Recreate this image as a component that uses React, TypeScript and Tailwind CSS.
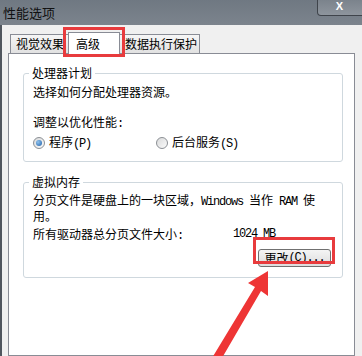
import React from "react";

// latin glyphs in the old SimSun dialog are half-width, so squeeze the mono a bit
const L = ({ children }: { children: React.ReactNode }) => (
  <span className="font-['Liberation_Mono',monospace] text-[12px] tracking-[-1.2px]">{children}</span>
);

const Radio = ({ checked }: { checked?: boolean }) => (
  <span className="w-[12px] h-[12px] rounded-full border border-[#8b8f94] bg-gradient-to-br from-[#d9dadb] to-[#fbfbfb] flex items-center justify-center shrink-0">
    {checked && <span className="w-[6px] h-[6px] rounded-full bg-[radial-gradient(circle_at_35%_35%,#8fc3ee,#1f5fa8)]"></span>}
  </span>
);

const Tab = ({ label, width, active }: { label: string; width: string; active?: boolean }) => (
  <div
    className={
      active
        ? `relative z-10 h-[22px] -mb-px -ml-px bg-white border border-b-0 border-[#898c95] pl-[7px] flex items-center ${width}`
        : `h-[19px] -ml-px first:ml-0 bg-gradient-to-b from-[#f6f6f6] to-[#e1e1e1] border border-b-0 border-[#898c95] pl-[5px] flex items-center ${width}`
    }
  >
    {label}
  </div>
);

export default function App() {
  return (
    <div className="relative w-[362px] h-[356px] overflow-hidden bg-[#f0f0f0] flex flex-col text-[12px] text-black font-['Noto_Sans_CJK_SC','Liberation_Sans',sans-serif]">
      {/* title bar */}
      <div className="relative h-[25px] shrink-0 bg-gradient-to-b from-[#6f7882] to-[#7c848d] flex items-center pl-[3px]">
        <span className="text-[13px] text-[#111]">性能选项</span>
        <div className="absolute top-0 right-[-4px] w-[49px] h-[16px] rounded-bl-[4px] border border-t-0 border-[#3f444b] bg-gradient-to-b from-[#7b838c] to-[#8e959d] flex items-center justify-center">
          <span className="text-white font-bold text-[11px] leading-none font-['Liberation_Sans',sans-serif] -mt-[2px] -ml-[4px]">X</span>
        </div>
      </div>

      <div className="flex-1 flex flex-col border-l-2 border-[#50565e] pl-[6px] pt-[7px]">
        {/* tabs */}
        <div className="h-[21px] flex items-end pl-[2px]">
          <Tab label="视觉效果" width="w-[59px]" />
          <Tab label="高级" width="w-[52px]" active />
          <Tab label="数据执行保护" width="w-[81px]" />
        </div>

        {/* panel */}
        <div className="flex-1 w-[347px] bg-white border border-[#898c95] pl-[14px] pt-[12px]">
          <fieldset className="w-[320px] border border-[#cfd8de] rounded-[3px] pl-[9px] pr-[11px] pb-[11px]">
            <legend className="-ml-[4px] px-[3px] leading-[14px]">处理器计划</legend>
            <div className="flex flex-col leading-[14px]">
              <div className="mt-[5px]">选择如何分配处理器资源。</div>
              <div className="mt-[16px]">调整以优化性能<L>:</L></div>
              <div className="mt-[5px] h-[14px] flex items-center">
                <div className="w-[123px] flex items-center gap-[4px]">
                  <Radio checked />
                  <span>程序<L>(P)</L></span>
                </div>
                <div className="flex items-center gap-[4px]">
                  <Radio />
                  <span>后台服务<L>(S)</L></span>
                </div>
              </div>
            </div>
          </fieldset>

          <fieldset className="mt-[13px] w-[320px] border border-[#cfd8de] rounded-[3px] pl-[9px] pr-[11px] pb-[10px]">
            <legend className="-ml-[4px] px-[3px] leading-[14px]">虚拟内存</legend>
            <div className="flex flex-col">
              <div className="mt-[4px] leading-[13px] whitespace-nowrap">
                分页文件是硬盘上的一块区域，<L>Windows </L>当作<L> RAM </L>使
              </div>
              <div className="leading-[13px]">用。</div>
              <div className="mt-[5px] leading-[14px] flex">
                <span className="w-[200px]">所有驱动器总分页文件大小<L>:</L></span>
                <L>1024 MB</L>
              </div>
              <button className="mt-[6px] self-end w-[73px] h-[18px] rounded-[3px] border border-[#707070] bg-gradient-to-b from-[#f4f4f4] to-[#dcdcdc] flex items-center justify-center leading-none">
                更改<L>(C)...</L>
              </button>
            </div>
          </fieldset>
        </div>
      </div>

      {/* annotations */}
      <div className="absolute left-[63px] top-[27px] w-[62px] h-[30px] border-[3px] border-[#e83b3d] z-20"></div>
      <div className="absolute left-[253px] top-[237px] w-[82px] h-[27px] border-[3px] border-[#e83b3d] z-20"></div>
      <svg className="absolute left-0 top-0 z-20" width="362" height="356" viewBox="0 0 362 356">
        <polygon points="268,271 248,283 255,287 212,358 222,358 261,291 268,296" fill="#ee3535" />
      </svg>
    </div>
  );
}
